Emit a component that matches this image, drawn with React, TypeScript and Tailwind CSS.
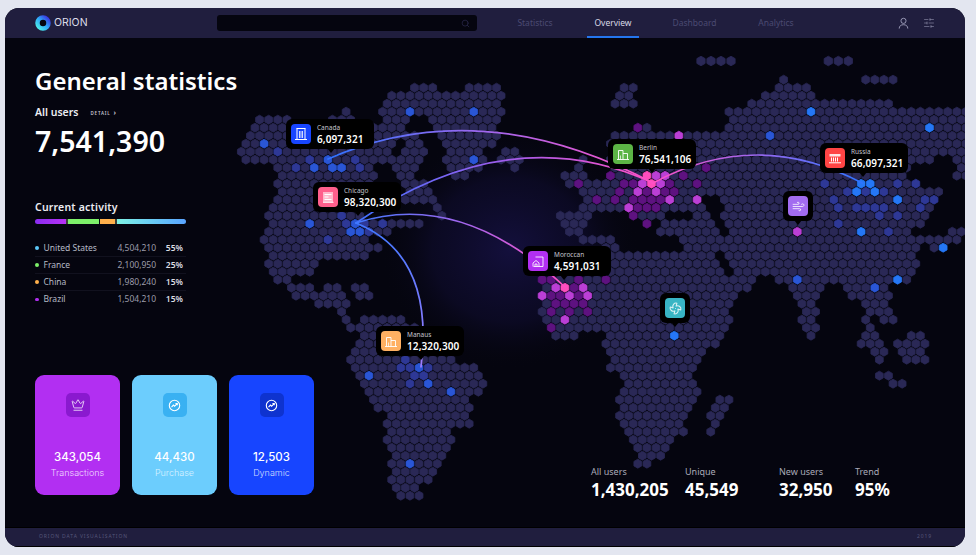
import { type ReactNode } from 'react';
import { Search, SlidersHorizontal, Wind, Fan, Crown } from 'lucide-react';

// hex map: row -> inclusive column ranges
const ROWS: [number, number][][] = [
  [[60, 60], [69, 72]],
  [[19, 21], [25, 28], [42, 43], [59, 62]],
  [[17, 29], [42, 43], [58, 63]],
  [[16, 28], [41, 43], [56, 71]],
  [[12, 12], [16, 29], [54, 80]],
  [[2, 5], [10, 12], [16, 18], [21, 28], [54, 80]],
  [[2, 5], [15, 18], [22, 28], [44, 45], [54, 80]],
  [[1, 5], [14, 19], [22, 28], [41, 80]],
  [[1, 5], [15, 17], [19, 20], [23, 28], [41, 80]],
  [[0, 16], [18, 20], [23, 26], [29, 30], [41, 80]],
  [[1, 17], [18, 20], [23, 27], [29, 31], [38, 38], [41, 76], [79, 80]],
  [[4, 14], [17, 19], [23, 26], [30, 30], [37, 37], [41, 73], [79, 80]],
  [[5, 15], [18, 19], [24, 25], [36, 38], [41, 73], [79, 80]],
  [[4, 14], [18, 20], [36, 74], [80, 80]],
  [[5, 13], [19, 21], [38, 77]],
  [[4, 13], [18, 21], [38, 50], [53, 76]],
  [[4, 13], [22, 22], [38, 51], [54, 76]],
  [[3, 13], [22, 22], [35, 38], [43, 46], [50, 51], [53, 75]],
  [[4, 20], [36, 38], [45, 45], [47, 52], [54, 75]],
  [[3, 16], [36, 37], [46, 52], [54, 73], [78, 79]],
  [[3, 14], [38, 41], [49, 79]],
  [[3, 15], [40, 41], [49, 74], [76, 77]],
  [[4, 14], [41, 52], [54, 74]],
  [[3, 8], [41, 52], [54, 74]],
  [[4, 8], [41, 53], [55, 74]],
  [[4, 5], [33, 56], [59, 73]],
  [[6, 8], [10, 11], [13, 14], [34, 56], [61, 64], [67, 71]],
  [[6, 11], [13, 14], [33, 54], [61, 63], [67, 71]],
  [[9, 12], [34, 54], [62, 63], [69, 71]],
  [[11, 11], [33, 53], [62, 63], [69, 71]],
  [[12, 12], [14, 18], [34, 54], [62, 63], [69, 69], [71, 72]],
  [[12, 19], [34, 53], [62, 63], [69, 69]],
  [[14, 19], [35, 37], [41, 53], [63, 63], [69, 70], [74, 75]],
  [[13, 19], [40, 52], [68, 70], [72, 75]],
  [[13, 19], [41, 51], [70, 71], [73, 75]],
  [[12, 23], [41, 50], [70, 70], [73, 75]],
  [[13, 26], [41, 50]],
  [[13, 26], [42, 49], [70, 71]],
  [[14, 27], [43, 50], [72, 73]],
  [[14, 26], [42, 50]],
  [[15, 25], [42, 50], [53, 54]],
  [[15, 25], [42, 49], [52, 53]],
  [[17, 25], [42, 49], [52, 53]],
  [[16, 25], [42, 48], [52, 52]],
  [[17, 23], [43, 49], [52, 52]],
  [[16, 23], [43, 47]],
  [[17, 23], [44, 47]],
  [[17, 22], [44, 46]],
  [[17, 22], [44, 45]],
  [[17, 21]],
  [[17, 21]],
  [[17, 19]],
  [[18, 20]],
];

const SPECIAL: Record<string, string[]> = {
  '#2577f6': ['4:63', '6:76', '13:68', '13:69', '14:68', '14:70', '15:72', '19:68', '21:77', '25:72', '32:48'],
  '#2a56d6': ['4:19', '4:26', '8:3', '10:26', '10:10', '11:8', '11:10', '11:11', '18:8', '18:13', '19:12', '19:13', '7:58', '25:61', '26:70', '36:20', '38:21', '39:23', '37:14', '48:19'],
  '#2e3896': ['9:4', '11:6', '10:8', '11:13', '18:14', '18:16', '19:14', '20:10', '17:11', '18:12', '10:13', '13:64', '13:72', '13:74', '14:67', '14:69', '14:71', '15:65', '15:75', '15:76', '16:66', '16:68', '16:69', '16:70', '16:71', '16:75', '17:70', '17:72', '18:66', '19:71', '35:18', '36:18', '36:19', '36:21', '37:19', '37:20', '38:19'],
  '#5e1280': ['6:44', '11:51', '12:41', '12:49', '13:37', '13:42', '13:43', '13:47', '13:50', '14:42', '14:45', '14:47', '14:48', '15:39', '15:41', '15:43', '15:44', '15:45', '15:46', '16:44', '16:45', '16:46', '17:43', '18:45', '25:33', '25:34', '25:37', '25:40', '26:37', '27:34', '27:35', '27:37', '28:35', '28:36', '28:37', '28:38', '29:34', '29:36', '29:38', '31:34'],
  '#bb3fd6': ['7:48', '12:46', '12:47', '13:44', '13:46', '14:44', '14:46', '15:47', '15:50', '16:43', '19:61', '26:35', '26:38', '27:33', '27:36', '27:38', '30:36'],
  '#ff4dbd': ['12:45', '13:45', '26:36'],
};

const HEX_BASE = '#2a2856';

function hexPath(x: number, y: number, r: number) {
  const w = r * 0.866;
  return `M${x.toFixed(2)} ${(y - r).toFixed(2)}L${(x + w).toFixed(2)} ${(y - r / 2).toFixed(2)}L${(x + w).toFixed(2)} ${(y + r / 2).toFixed(2)}L${x.toFixed(2)} ${(y + r).toFixed(2)}L${(x - w).toFixed(2)} ${(y + r / 2).toFixed(2)}L${(x - w).toFixed(2)} ${(y - r / 2).toFixed(2)}Z`;
}

function buildHexes() {
  const lookup = new Map<string, string>();
  Object.entries(SPECIAL).forEach(([color, keys]) => keys.forEach((k) => lookup.set(k, color)));
  const byColor: Record<string, string> = { [HEX_BASE]: '' };
  ROWS.forEach((ranges, r) => {
    ranges.forEach(([a, b]) => {
      for (let c = a; c <= b; c++) {
        const x = 236.75 + 9.115 * c + (r % 2 ? 4.557 : 0);
        const y = 79.67 + 8 * r;
        const color = lookup.get(`${r}:${c}`) ?? HEX_BASE;
        byColor[color] = (byColor[color] ?? '') + hexPath(x, y, 4.5);
      }
    });
  });
  // the loose islands on top sit off the grid
  [701, 711, 721, 731, 828.3, 838.3, 848.3].forEach((x) => {
    byColor[HEX_BASE] += hexPath(x, 61, 4.8);
  });
  return byColor;
}

const HEXES = buildHexes();

function WorldMap() {
  return (
    <svg viewBox="5 38 960 490" className="absolute inset-0 w-[960px] h-[490px]">
      <defs>
        <radialGradient id="glow">
          <stop offset="0" stopColor="#1a1450" stopOpacity="0.7" />
          <stop offset="0.6" stopColor="#14103f" stopOpacity="0.4" />
          <stop offset="1" stopColor="#05050f" stopOpacity="0" />
        </radialGradient>
        <linearGradient id="a1" gradientUnits="userSpaceOnUse" x1="328" y1="0" x2="653" y2="0">
          <stop offset="0" stopColor="#2f73ff" />
          <stop offset="0.45" stopColor="#9a68f0" />
          <stop offset="1" stopColor="#ff50c4" />
        </linearGradient>
        <linearGradient id="a2" gradientUnits="userSpaceOnUse" x1="356" y1="0" x2="653" y2="0">
          <stop offset="0" stopColor="#3f70ff" />
          <stop offset="0.5" stopColor="#a05cec" />
          <stop offset="1" stopColor="#ff50c4" />
        </linearGradient>
        <linearGradient id="a3" gradientUnits="userSpaceOnUse" x1="356" y1="0" x2="565" y2="0">
          <stop offset="0" stopColor="#3f78ff" />
          <stop offset="0.5" stopColor="#a066ee" />
          <stop offset="1" stopColor="#ff50c4" />
        </linearGradient>
        <linearGradient id="a4" gradientUnits="userSpaceOnUse" x1="0" y1="223" x2="0" y2="367">
          <stop offset="0" stopColor="#3f78ff" />
          <stop offset="1" stopColor="#a07cff" />
        </linearGradient>
        <linearGradient id="a5" gradientUnits="userSpaceOnUse" x1="653" y1="0" x2="862" y2="0">
          <stop offset="0" stopColor="#ff50c4" />
          <stop offset="0.5" stopColor="#9a68f0" />
          <stop offset="1" stopColor="#2f73ff" />
        </linearGradient>
      </defs>
      <ellipse cx="510" cy="250" rx="130" ry="120" fill="url(#glow)" />
      {Object.entries(HEXES).map(([color, d]) => (
        <path key={color} d={d} fill={color} stroke={color} strokeWidth="0.8" strokeLinejoin="round" />
      ))}
      <g fill="none" strokeWidth="1.7" strokeLinecap="round">
        <path d="M328 159Q480 92 653 183" stroke="url(#a1)" />
        <path d="M356 223Q510 117 653 183" stroke="url(#a2)" />
        <path d="M356 223Q460 189 565 287" stroke="url(#a3)" />
        <path d="M356 223Q435 255 421 367" stroke="url(#a4)" />
        <path d="M653 183Q757 127 862 183" stroke="url(#a5)" />
      </g>
    </svg>
  );
}

function BuildingIcon() {
  return (
    <svg viewBox="0 0 20 20" className="w-full h-full" fill="none" stroke="#fff" strokeWidth="1" strokeOpacity="0.9">
      <path d="M4 15.5h12M5.5 15.5V6.5h4.5v9M10 9.5h4.500v6" />
      <path d="M7.500 15.500v-4" strokeOpacity="0.7" />
    </svg>
  );
}

const ICONS: Record<string, ReactNode> = {
  bank: (
    <svg viewBox="0 0 20 20" className="w-full h-full" fill="none" stroke="#fff" strokeWidth="1">
      <path d="M5.500 4.500h9M6 4.500v10.500M14 4.500v10.500M4 15.500h12" />
      <path d="M8.500 7v7M10 7v7M11.500 7v7" strokeOpacity="0.8" />
    </svg>
  ),
  news: (
    <svg viewBox="0 0 20 20" className="w-full h-full">
      <rect x="5" y="5" width="10" height="10" fill="#fff" fillOpacity="0.55" />
      <path d="M5 15.300h10.500M6.500 7.500h7M6.500 10h4M6.500 12.500h7" stroke="#fff" strokeWidth="1" />
    </svg>
  ),
  building: <BuildingIcon />,
  house: (
    <svg viewBox="0 0 20 20" className="w-full h-full" fill="none" stroke="#fff" strokeWidth="1" strokeOpacity="0.85">
      <path d="M7.500 6h7.500v9.500H5.500" />
      <path d="M5 15.500v-3.500l3-2.500 3 2.500v3.500M7 15.500v-2.500h2v2.500" />
    </svg>
  ),
  roof: (
    <svg viewBox="0 0 20 20" className="w-full h-full">
      <path d="M4.500 8.500V6h11v2.500Z" fill="#fff" fillOpacity="0.85" />
      <path d="M4 14.800h12M6.500 9.500v4M8.500 9.500v4M10.500 9.500v4M12.500 9.500v4" stroke="#fff" strokeWidth="1" />
    </svg>
  ),
  wind: (
    <div className="w-full h-full flex items-center justify-center text-white/90">
      <Wind size={13} strokeWidth={1.6} />
    </div>
  ),
  fan: (
    <div className="w-full h-full flex items-center justify-center text-white/80">
      <Fan size={13} strokeWidth={2} />
    </div>
  ),
};

type Pin = {
  pos: string;
  tip: string;
  color: string;
  icon: string;
  label?: string;
  value?: string;
};

const PINS: Pin[] = [
  { pos: 'left-[281px] top-[81px]', tip: 'left-[41px]', color: 'bg-[#1745ff]', icon: 'bank', label: 'Canada', value: '6,097,321' },
  { pos: 'left-[308px] top-[144px]', tip: 'left-[41px]', color: 'bg-[#ff5f8c]', icon: 'news', label: 'Chicago', value: '98,320,300' },
  { pos: 'left-[371px] top-[288px]', tip: 'left-[41px]', color: 'bg-[#ffb062]', icon: 'building', label: 'Manaus', value: '12,320,300' },
  { pos: 'left-[603px] top-[101px]', tip: 'left-[40px]', color: 'bg-[#5cb445]', icon: 'building', label: 'Berlin', value: '76,541,106' },
  { pos: 'left-[518px] top-[208px]', tip: 'left-[37px]', color: 'bg-[#b22ff2]', icon: 'house', label: 'Moroccan', value: '4,591,031' },
  { pos: 'left-[815px] top-[105px]', tip: 'left-[39px]', color: 'bg-[#ff4444]', icon: 'roof', label: 'Russia', value: '66,097,321' },
  { pos: 'left-[778px] top-[153px]', tip: 'left-[11px]', color: 'bg-[#a26cf0]', icon: 'wind' },
  { pos: 'left-[655px] top-[255px]', tip: 'left-[11px]', color: 'bg-[#38b5c4]', icon: 'fan' },
];

function MapPin({ pin }: { pin: Pin }) {
  return (
    <div className={`absolute ${pin.pos} bg-black rounded-[6px] h-[30px] flex items-center p-[5px] ${pin.label ? 'w-[88px]' : 'w-[30px]'}`}>
      <div className={`w-[20px] h-[20px] rounded-[4px] shrink-0 ${pin.color}`}>{ICONS[pin.icon]}</div>
      {pin.label && (
        <div className="ml-[6px] flex flex-col">
          <span className="text-[6.5px] leading-[9px] text-[#c4c4cc]">{pin.label}</span>
          <span className="text-[10px] leading-[13px] font-semibold text-white tracking-[0.1px] mt-[1px]">{pin.value}</span>
        </div>
      )}
      <div className={`absolute top-[29px] ${pin.tip} w-0 h-0 border-x-[4px] border-x-transparent border-t-[5px] border-t-black`} />
    </div>
  );
}

function TrendIcon() {
  return (
    <svg viewBox="0 0 14 14" className="w-[13px] h-[13px]" fill="none" stroke="#fff" strokeWidth="1.200">
      <circle cx="7" cy="7" r="5.600" />
      <path d="M3.800 8.800l2-2.200 1.300 1.200 2.800-2.800M8 4.900h2v1.900" />
    </svg>
  );
}

const CARDS = [
  { bg: 'bg-[#b22ff2]', box: 'bg-[#8a19cf]', value: '343,054', label: 'Transactions', icon: <Crown size={14} strokeWidth={1.3} className="text-white" />, text: 'text-[#f0d8ff]' },
  { bg: 'bg-[#6ccdfd]', box: 'bg-[#39b1f2]', value: '44,430', label: 'Purchase', icon: <TrendIcon />, text: 'text-[#d8f2ff]' },
  { bg: 'bg-[#1745ff]', box: 'bg-[#0e33cf]', value: '12,503', label: 'Dynamic', icon: <TrendIcon />, text: 'text-[#cfdaff]' },
];

const COUNTRIES = [
  { dot: 'bg-[#5cc8f8]', name: 'United States', count: '4,504,210', pct: '55%' },
  { dot: 'bg-[#7ef06a]', name: 'France', count: '2,100,950', pct: '25%' },
  { dot: 'bg-[#ffb04c]', name: 'China', count: '1,980,240', pct: '15%' },
  { dot: 'bg-[#b02ff0]', name: 'Brazil', count: '1,504,210', pct: '15%' },
];

const BOTTOM = [
  { w: 'w-[94px]', label: 'All users', value: '1,430,205' },
  { w: 'w-[94px]', label: 'Unique', value: '45,549' },
  { w: 'w-[76px]', label: 'New users', value: '32,950' },
  { w: 'w-[60px]', label: 'Trend', value: '95%' },
];

const NAV = [
  { name: 'Statistics', cls: 'w-[78px]' },
  { name: 'Overview', cls: 'w-[78px]' },
  { name: 'Dashboard', cls: 'w-[78px] ml-[3.5px]' },
  { name: 'Analytics', cls: 'w-[78px] ml-[3.5px]' },
];

function Logo() {
  return (
    <svg viewBox="0 0 16 16" className="w-[16px] h-[16px]">
      <defs>
        <linearGradient id="logo" x1="0" y1="1" x2="1" y2="0">
          <stop offset="0" stopColor="#4ff0e8" />
          <stop offset="0.5" stopColor="#2ea8f8" />
          <stop offset="1" stopColor="#3a30e0" />
        </linearGradient>
      </defs>
      <circle cx="8" cy="8" r="5.500" fill="#05050f" stroke="url(#logo)" strokeWidth="4.500" />
    </svg>
  );
}

function UserIcon() {
  return (
    <svg viewBox="0 0 12 14" className="w-[11px] h-[12px]" fill="none" stroke="#a9a9c4" strokeWidth="1">
      <circle cx="6" cy="4.500" r="3" />
      <path d="M1 13.500c0-3 2-4.500 5-4.500s5 1.500 5 4.500" />
    </svg>
  );
}

export default function App() {
  return (
    <div className="w-[976px] h-[555px] overflow-hidden bg-[#e3e6f0] pt-[8px] pl-[5px] font-['Noto_Sans',sans-serif]">
      <div className="w-[960px] h-[539px] rounded-[14px] overflow-hidden flex flex-col bg-[#05050f]">
        <header className="h-[30px] shrink-0 bg-[#201e3e] flex items-center">
          <div className="w-[212px] pl-[30px] flex items-center gap-[3px]">
            <Logo />
            <span className="font-['Inter',sans-serif] text-[10.500px] text-[#dcdce8]">ORION</span>
          </div>
          <div className="w-[260px] h-[16px] bg-[#05050f] rounded-[3px] flex items-center justify-end pr-[7px]">
            <Search size={9} className="text-[#2b2a4c]" />
          </div>
          <nav className="ml-[19px] h-full flex">
            {NAV.map((item) => (
              <div key={item.name} className={`flex justify-center ${item.cls}`}>
                <div className={`w-[52px] h-full flex items-center justify-center pt-[2px] border-b-[2px] text-[8.500px] ${item.name === 'Overview' ? 'border-[#2476ee] text-[#d8d8e6]' : 'border-transparent text-[#4b4a72]'}`}>
                  {item.name}
                </div>
              </div>
            ))}
          </nav>
          <div className="ml-auto pr-[30px] flex items-center gap-[14px]">
            <UserIcon />
            <SlidersHorizontal size={12} strokeWidth={1} className="text-[#a9a9c4]" />
          </div>
        </header>

        <main className="relative flex-1 overflow-hidden border-b border-[#000]">
          <WorldMap />
          <div className="relative h-full pl-[30px] pt-[27px] pb-[32px] flex flex-col w-[320px]">
            <h1 className="text-[24px] leading-[32px] font-semibold text-white">General statistics</h1>
            <div className="mt-[10px] h-[12px] flex items-center">
              <span className="text-[10.500px] font-semibold text-[#ececf2]">All users</span>
              <span className="ml-[12px] text-[4.500px] font-semibold tracking-[0.8px] text-[#c4c4d0]">DETAIL</span>
              <span className="ml-[3px] text-[7px] font-bold text-[#c4c4d0]">›</span>
            </div>
            <div className="mt-[4px] text-[28.500px] leading-[36px] font-semibold text-white">7,541,390</div>

            <div className="mt-[41px] text-[10.500px] leading-[14px] font-semibold text-[#ececf2] tracking-[0.2px]">Current activity</div>
            <div className="mt-[5px] w-[151px] h-[5px] flex rounded-full overflow-hidden">
              <div className="w-[31px] bg-gradient-to-r from-[#8a2cf0] to-[#b730f4]" />
              <div className="w-[1.500px] bg-[#3c4038]" />
              <div className="w-[31.500px] bg-[#7ef06a]" />
              <div className="w-[1px]" />
              <div className="w-[15px] bg-[#ffb04c]" />
              <div className="w-[1.500px] bg-[#3c4038]" />
              <div className="flex-1 bg-gradient-to-r from-[#7ff2e4] to-[#5aa4ff]" />
            </div>
            <div className="mt-[16px] w-[151px] flex flex-col">
              {COUNTRIES.map((row, i) => (
                <div key={row.name} className={`h-[17px] flex items-center text-[8.500px] ${i < 3 ? 'border-b border-[#11111e]' : ''}`}>
                  <span className={`w-[3.500px] h-[3.500px] rounded-full ${row.dot}`} />
                  <span className="ml-[5px] text-[#b6bac6]">{row.name}</span>
                  <span className="ml-auto text-[#9c9caa]">{row.count}</span>
                  <span className="w-[30px] text-right pr-[3px] font-semibold text-[#dcdce2]">{row.pct}</span>
                </div>
              ))}
            </div>

            <div className="mt-auto flex gap-[12px]">
              {CARDS.map((card) => (
                <div key={card.label} className={`w-[85px] h-[120px] rounded-[9px] flex flex-col items-center pt-[18px] font-['Inter',sans-serif] ${card.bg}`}>
                  <div className={`w-[24px] h-[24px] rounded-[5px] flex items-center justify-center ${card.box}`}>{card.icon}</div>
                  <div className="mt-[32px] text-[11.500px] leading-[16px] font-medium text-white">{card.value}</div>
                  <div className={`mt-[1px] text-[9px] leading-[13px] font-light ${card.text}`}>{card.label}</div>
                </div>
              ))}
            </div>
          </div>

          {PINS.map((pin) => (
            <MapPin key={pin.pos} pin={pin} />
          ))}

          <div className="absolute left-[586px] top-[427px] flex">
            {BOTTOM.map((s) => (
              <div key={s.label} className={s.w}>
                <div className="text-[9px] leading-[14px] text-[#aaaab8]">{s.label}</div>
                <div className="text-[17px] leading-[22px] font-bold text-white">{s.value}</div>
              </div>
            ))}
          </div>
        </main>

        <footer className="h-[19px] shrink-0 bg-[#201e3e] flex items-center justify-between pl-[34px] pr-[33px] text-[5px] tracking-[0.900px] text-[#56567a] border-b border-[#000]">
          <span>ORION DATA VISUALISATION</span>
          <span>2019</span>
        </footer>
      </div>
    </div>
  );
}
